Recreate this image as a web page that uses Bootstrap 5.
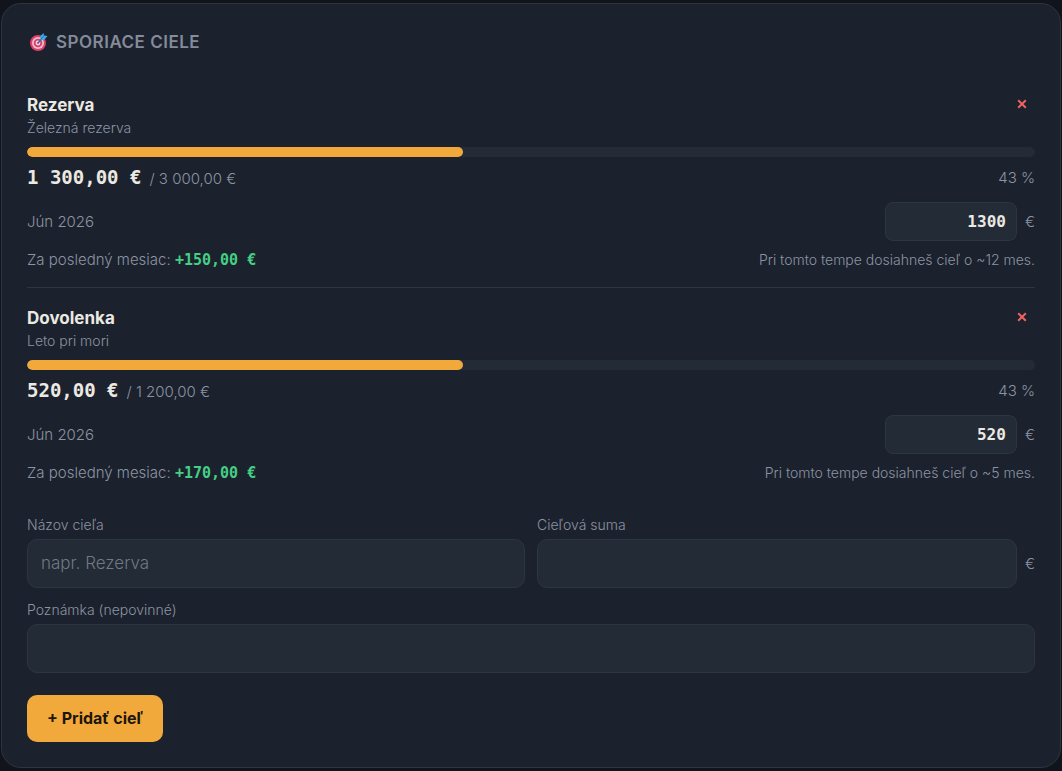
<!DOCTYPE html>
<html lang="sk">
<head>
<meta charset="utf-8">
<meta name="viewport" content="width=device-width, initial-scale=1">
<title>Sporiace ciele</title>
<link href="https://cdn.jsdelivr.net/npm/bootstrap@5.3.0/dist/css/bootstrap.min.css" rel="stylesheet">
<style>
:root{--ink:#ece9e2;--muted:#8d93a3;--panel:#1b222d;--field:#222b36;--line:#2d3541;--accent:#f2a93b;--gain:#45cf85;--loss:#f0625f}
body{background:#11141b;color:var(--muted);font-family:Inter,"Open Sans",sans-serif;font-size:15px;line-height:22px;font-weight:300;padding:3px 1px}
.panel{background:var(--panel);border:1px solid var(--line);border-radius:20px;padding:25px}
.panel-title{font-size:17px;line-height:26px;font-weight:600;letter-spacing:.5px;margin-bottom:20px;color:#858b9a}
.goal{padding:18px 0 16px;border-bottom:1px solid var(--line)}
.goal:last-of-type{border-bottom:0;padding-bottom:0}
.goal-name{font-size:17px;line-height:24px;font-weight:700;color:var(--ink);margin:0}
.fine{font-size:14px}
.remove{border:0;background:none;padding:0 8px;color:var(--loss);line-height:20px}
.track{height:10px;background:var(--field);border-radius:5px;margin:8px 0 7px}
.track .progress-bar{background:var(--accent);border-radius:5px}
.amount-row{line-height:26px}
.num{font-family:"DejaVu Sans Mono",monospace;font-weight:700}
.saved{font-size:19px;color:var(--ink)}
.month-row{margin:10px 0 8px}
.gain{font-size:15px;color:var(--gain)}
.field,.field:focus{background:var(--field);border:1px solid var(--line);border-radius:10px;color:var(--ink);font-size:17px;line-height:27px;font-weight:300;padding:10px 13px}
.field::placeholder{color:#737880}
.field-sm,.field-sm:focus{width:132px;border-radius:8px;font-size:16px;line-height:25px;font-weight:700;padding:6px 10px;text-align:right}
.new-goal{margin-top:31px}
.new-goal .row{--bs-gutter-x:12px;--bs-gutter-y:12px}
.new-goal label{font-size:14px;line-height:20px;margin-bottom:4px}
.add,.add:hover{background:var(--accent);color:#1c160c;border:0;border-radius:10px;font-size:16px;line-height:23px;font-weight:700;padding:12px 20px;margin-top:22px}
</style>
</head>
<body>
<main class="panel">
  <h1 class="panel-title d-flex align-items-center gap-2 text-uppercase">
    <svg width="21" height="20" viewBox="0 0 21 20" aria-hidden="true"><circle cx="11" cy="11" r="8" fill="#df3f68"/><circle cx="11" cy="11" r="6" fill="#eebfd0"/><circle cx="11" cy="11" r="4.300" fill="#df3f68"/><circle cx="11" cy="11" r="2.400" fill="#f3dce6"/><circle cx="11" cy="11" r="1" fill="#df3f68"/><path d="M11 11 16 5.500" stroke="#276da5" stroke-width="1.500"/><path d="M13 4.500 16.500 1 17 3.500 20.500 4 16.800 8.200 13.500 7.800Z" fill="#3fa8e4"/><path d="M13.500 7.800 17 3.500" stroke="#1d79bb"/></svg>
    Sporiace ciele
  </h1>

  <section class="goal">
    <div class="d-flex justify-content-between align-items-start">
      <div><h2 class="goal-name">Rezerva</h2><div class="fine">Železná rezerva</div></div>
      <button type="button" class="remove" aria-label="Odstrániť cieľ Rezerva"><svg width="10" height="10" viewBox="0 0 10 10" aria-hidden="true"><path d="M1.200 1.200 8.800 8.800M8.800 1.200 1.200 8.800" stroke="currentColor" stroke-width="2"/></svg></button>
    </div>
    <div class="progress track" role="progressbar" aria-label="Rezerva" aria-valuenow="43" aria-valuemin="0" aria-valuemax="100"><div class="progress-bar" style="width:43.3%"></div></div>
    <div class="amount-row d-flex justify-content-between align-items-center">
      <div class="d-flex align-items-baseline gap-2"><span class="num saved">1&nbsp;300,00&nbsp;€</span><span>/ 3 000,00 €</span></div><span>43 %</span>
    </div>
    <div class="month-row d-flex justify-content-between align-items-center">
      <label for="m1">Jún 2026</label>
      <div class="d-flex align-items-center gap-2"><input id="m1" class="form-control field field-sm num" inputmode="decimal" value="1300"><span>€</span></div>
    </div>
    <div class="d-flex justify-content-between"><div>Za posledný mesiac: <span class="num gain">+150,00&nbsp;€</span></div><div class="fine">Pri tomto tempe dosiahneš cieľ o ~12 mes.</div></div>
  </section>

  <section class="goal">
    <div class="d-flex justify-content-between align-items-start">
      <div><h2 class="goal-name">Dovolenka</h2><div class="fine">Leto pri mori</div></div>
      <button type="button" class="remove" aria-label="Odstrániť cieľ Dovolenka"><svg width="10" height="10" viewBox="0 0 10 10" aria-hidden="true"><path d="M1.200 1.200 8.800 8.800M8.800 1.200 1.200 8.800" stroke="currentColor" stroke-width="2"/></svg></button>
    </div>
    <div class="progress track" role="progressbar" aria-label="Dovolenka" aria-valuenow="43" aria-valuemin="0" aria-valuemax="100"><div class="progress-bar" style="width:43.3%"></div></div>
    <div class="amount-row d-flex justify-content-between align-items-center">
      <div class="d-flex align-items-baseline gap-2"><span class="num saved">520,00&nbsp;€</span><span>/ 1 200,00 €</span></div><span>43 %</span>
    </div>
    <div class="month-row d-flex justify-content-between align-items-center">
      <label for="m2">Jún 2026</label>
      <div class="d-flex align-items-center gap-2"><input id="m2" class="form-control field field-sm num" inputmode="decimal" value="520"><span>€</span></div>
    </div>
    <div class="d-flex justify-content-between"><div>Za posledný mesiac: <span class="num gain">+170,00&nbsp;€</span></div><div class="fine">Pri tomto tempe dosiahneš cieľ o ~5 mes.</div></div>
  </section>

  <form class="new-goal">
    <div class="row">
      <div class="col-6"><label class="d-block" for="name">Názov cieľa</label><input id="name" class="form-control field" placeholder="napr. Rezerva"></div>
      <div class="col-6"><label class="d-block" for="sum">Cieľová suma</label><div class="d-flex align-items-center gap-2"><input id="sum" class="form-control field" inputmode="decimal"><span>€</span></div></div>
      <div class="col-12"><label class="d-block" for="note">Poznámka (nepovinné)</label><input id="note" class="form-control field"></div>
    </div>
    <button type="button" class="btn add">+ Pridať cieľ</button>
  </form>
</main>
<script src="https://cdn.jsdelivr.net/npm/bootstrap@5.3.0/dist/js/bootstrap.bundle.min.js"></script>
</body>
</html>
